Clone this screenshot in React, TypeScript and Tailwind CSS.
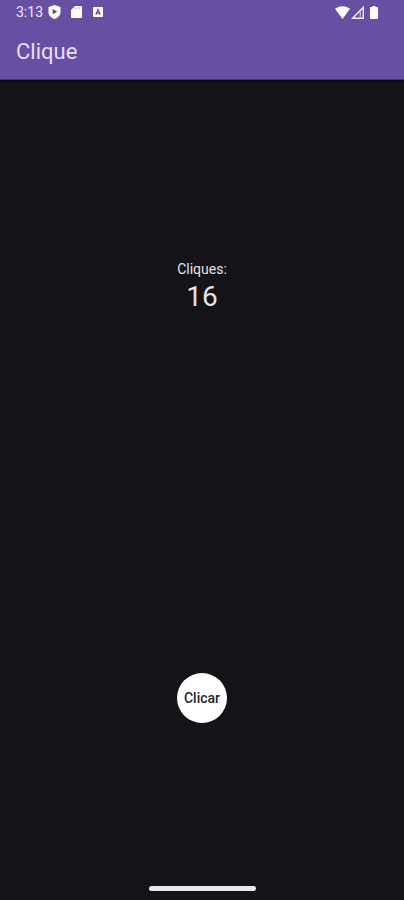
import { useState } from "react";

function StatusBar() {
  return (
    <div className="flex h-6 items-center justify-between pr-[26px] pl-4 text-[#f1ebfa]">
      <div className="flex items-center">
        <span className="w-8 text-sm leading-6">3:13</span>
        <svg className="h-[14px] w-[13px]" viewBox="0 0 12 14" aria-hidden="true">
          <path d="M6 0 12 2v5c0 3.300-2.500 6-6 7C2.500 13 0 10.300 0 7V2Z" fill="#fff" />
          <path d="M4.200 4.100 8.800 6.700 4.200 9.300Z" fill="#5b4694" />
        </svg>
        <svg className="ml-[10px] h-3 w-[11px]" viewBox="0 0 11 12" aria-hidden="true">
          <path d="M4 0h6a1 1 0 0 1 1 1v10a1 1 0 0 1-1 1H1a1 1 0 0 1-1-1V4Z" fill="#fff" />
          <path d="M4.500 1.200v1.800M6.500 1.200v1.800M8.500 1.200v1.800" stroke="#b5a6d8" strokeWidth="0.800" />
        </svg>
        <svg className="ml-[11px] size-[10px]" viewBox="0 0 10 10" aria-hidden="true">
          <rect width="10" height="10" rx="1" fill="#fff" />
          <path d="M2.800 7.700 5 2.500 7.200 7.700M3.600 6.100h2.800" fill="none" stroke="#5b4694" strokeWidth="1.100" />
        </svg>
      </div>
      <div className="flex items-center">
        <svg className="h-[13px] w-[15px]" viewBox="0 0 15 12" aria-hidden="true" preserveAspectRatio="none">
          <path d="M0 2.500C4.300-.6 10.700-.6 15 2.500L7.500 12Z" fill="#fff" />
        </svg>
        <svg className="ml-px h-[13px] w-[13px]" viewBox="0 0 12 12" aria-hidden="true">
          <path d="M1.500 11.300 11.300 1.300v10Z" fill="none" stroke="#f1ebfa" strokeWidth="1.300" />
          <path d="M8.500 5v6" stroke="#f1ebfa" strokeWidth="0.800" />
        </svg>
        <svg className="ml-[6px] h-[13px] w-2" viewBox="0 0 8 12" aria-hidden="true" preserveAspectRatio="none">
          <path d="M2.500 0h3v1H7a1 1 0 0 1 1 1v9a1 1 0 0 1-1 1H1a1 1 0 0 1-1-1V2a1 1 0 0 1 1-1h1.500Z" fill="#fff" />
        </svg>
      </div>
    </div>
  );
}

export default function App() {
  const [clicks, setClicks] = useState(16);

  return (
    <div className="flex min-h-screen flex-col bg-[#141318] font-[Roboto,sans-serif]">
      <header className="border-b border-[#45366f] bg-[#6750a4] shadow-[0_2px_2px_#0a090c]">
        <StatusBar />
        <h1 className="flex h-[55px] items-center px-4 text-[22px] leading-7 text-[#e8def8]">Clique</h1>
      </header>

      <main className="flex flex-1 flex-col items-center">
        <div className="flex-[7]" />
        <section className="flex flex-col items-center text-[#e6e1e5]">
          <h2 className="text-sm leading-5">Cliques:</h2>
          <output className="text-[28px] leading-9" aria-live="polite">
            {clicks}
          </output>
        </section>
        <div className="flex-[14]" />
        <button
          type="button"
          onClick={() => setClicks(clicks + 1)}
          className="size-[50px] rounded-full bg-white text-sm font-medium text-[#29282b]"
        >
          Clicar
        </button>
        <div className="flex-[6]" />
      </main>

      <footer className="flex h-6 items-center justify-center">
        <div className="h-[5px] w-[107px] rounded-full bg-[#e9e9ea]" />
      </footer>
    </div>
  );
}
